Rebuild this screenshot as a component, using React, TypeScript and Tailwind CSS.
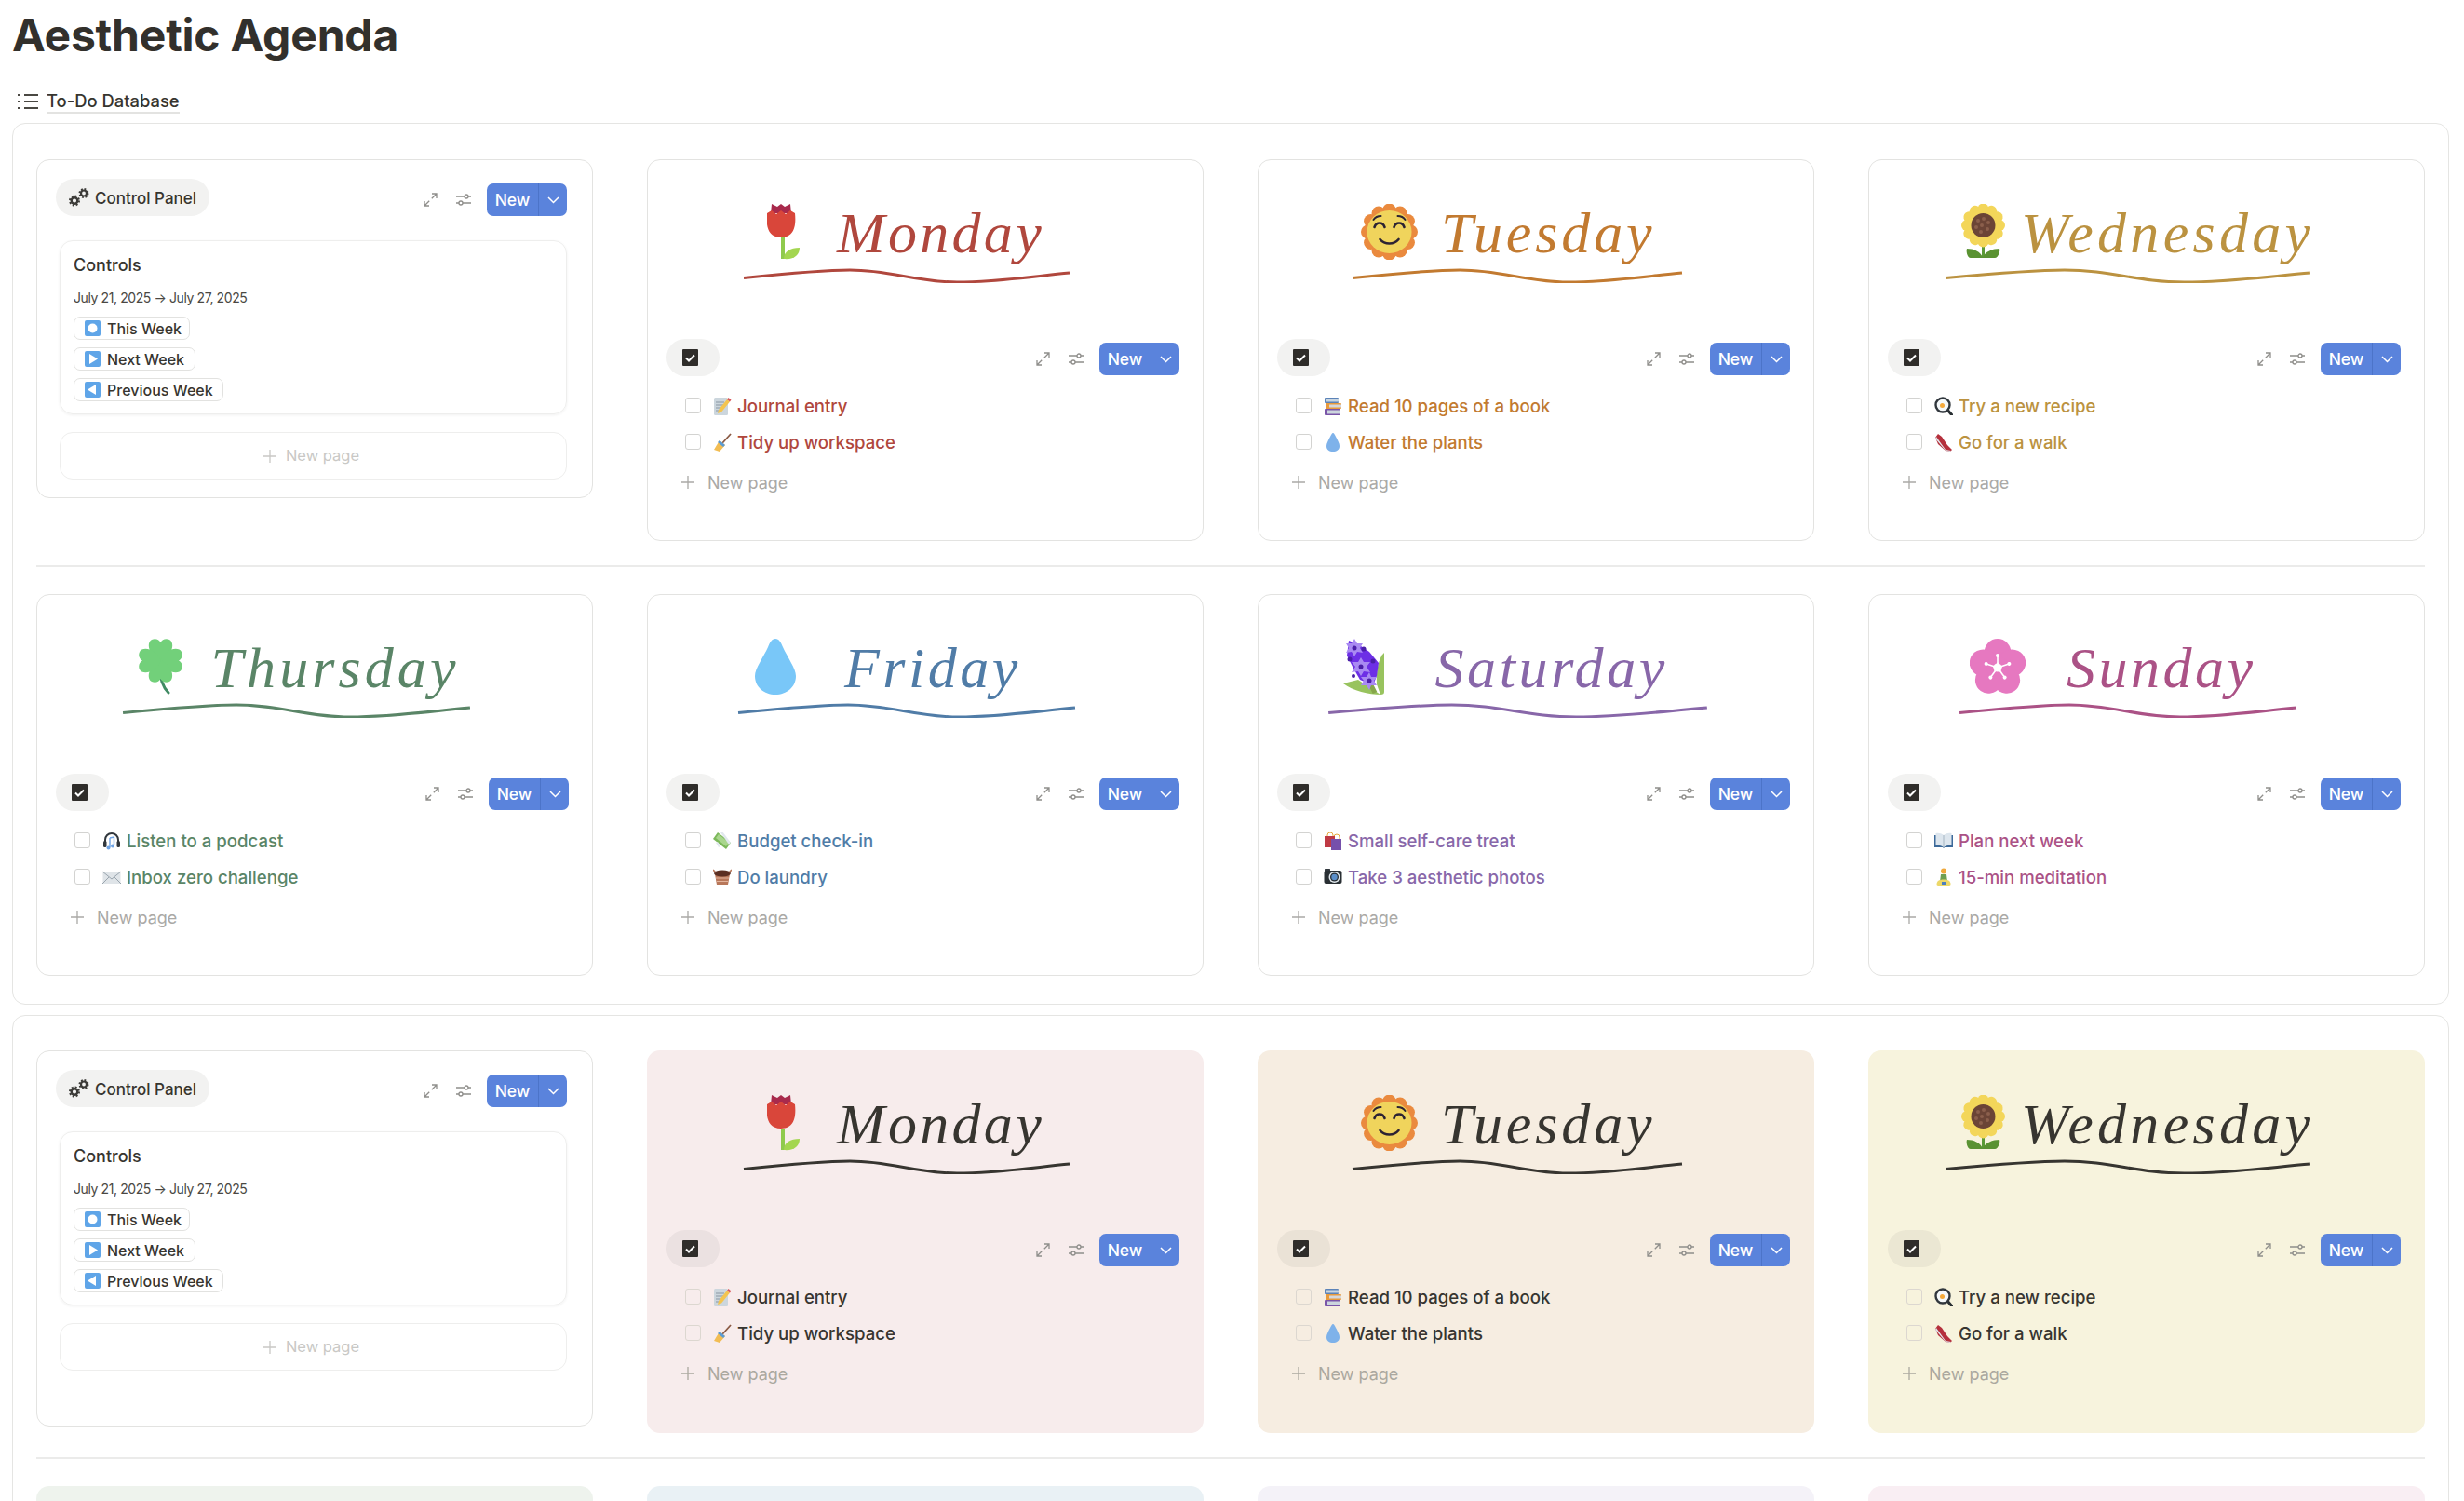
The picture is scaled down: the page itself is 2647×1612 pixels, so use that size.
import type { ReactNode } from 'react';

type Task = { icon: string; label: string };
type Day = {
  name: string;
  flower: string;
  color: string;
  underline: string;
  titleRow: string;
  tracking: string;
  tasks: Task[];
};

const days: Day[] = [
  { name: 'Monday', flower: 'tulip', color: 'text-[#b0473d]', underline: 'w-[352px]', titleRow: 'pl-[26px] gap-[40px]', tracking: 'tracking-[3.300px]', tasks: [{ icon: 'memo', label: 'Journal entry' }, { icon: 'broom', label: 'Tidy up workspace' }] },
  { name: 'Tuesday', flower: 'sun', color: 'text-[#c27a30]', underline: 'w-[356px]', titleRow: 'pl-[10px] gap-[25px]', tracking: 'tracking-[3.900px]', tasks: [{ icon: 'books', label: 'Read 10 pages of a book' }, { icon: 'drop', label: 'Water the plants' }] },
  { name: 'Wednesday', flower: 'sunflower', color: 'text-[#bb9240]', underline: 'w-[394px]', titleRow: 'pl-[18px] gap-[17px]', tracking: 'tracking-[4.300px]', tasks: [{ icon: 'pan', label: 'Try a new recipe' }, { icon: 'shoe', label: 'Go for a walk' }] },
  { name: 'Thursday', flower: 'clover', color: 'text-[#5a8567]', underline: 'w-[375px]', titleRow: 'pl-[18px] gap-[31px]', tracking: 'tracking-[4.100px]', tasks: [{ icon: 'headphones', label: 'Listen to a podcast' }, { icon: 'mail', label: 'Inbox zero challenge' }] },
  { name: 'Friday', flower: 'bigdrop', color: 'text-[#507ca7]', underline: 'w-[364px]', titleRow: 'pl-[19px] gap-[52px]', tracking: 'tracking-[3.500px]', tasks: [{ icon: 'money', label: 'Budget check-in' }, { icon: 'basket', label: 'Do laundry' }] },
  { name: 'Saturday', flower: 'hyacinth', color: 'text-[#8867a9]', underline: 'w-[409px]', titleRow: 'pl-[17px] gap-[55px]', tracking: 'tracking-[3.600px]', tasks: [{ icon: 'bags', label: 'Small self-care treat' }, { icon: 'camera', label: 'Take 3 aesthetic photos' }] },
  { name: 'Sunday', flower: 'blossom', color: 'text-[#ab5286]', underline: 'w-[364px]', titleRow: 'pl-[12px] gap-[44px]', tracking: 'tracking-[3.500px]', tasks: [{ icon: 'book', label: 'Plan next week' }, { icon: 'lotus', label: '15-min meditation' }] },
];

const flowers: Record<string, ReactNode> = {
  tulip: (
    <svg className="shrink-0" width="35" height="60" viewBox="0 0 35 60">
      <path d="M15 36h4v23h-4z" fill="#8fca4d" />
      <path d="M18 59c0-8 7-12 17-12 0 8-6 13-17 12z" fill="#a3d650" />
      <path d="M4 10 5 0l6 3 4-3 4 3 6-3 1 10z" fill="#a82a4c" />
      <path d="M0 10l5-3 5 4 5-4 5 4 5-4 5 3c1 10 1 26-15 26S-1 20 0 10z" fill="#d9463a" />
    </svg>
  ),
  sun: (
    <svg className="shrink-0" width="61" height="60" viewBox="0 0 60 60">
      {[0, 30, 60, 90, 120, 150, 180, 210, 240, 270, 300, 330].map((a) => (
        <circle key={a} cx={30 + 23 * Math.sin((a * Math.PI) / 180)} cy={30 - 23 * Math.cos((a * Math.PI) / 180)} r="7.5" fill="#ea8a3e" />
      ))}
      <circle cx="30" cy="30" r="23" fill="#ea8a3e" />
      <ellipse cx="30" cy="30" rx="24" ry="23" fill="#f0d45c" />
      <g fill="none" stroke="#2c2333" strokeWidth="2.6" strokeLinecap="round">
        <path d="M14 25c2-6 9-6 11 0" />
        <path d="M35 25c2-6 9-6 11 0" />
        <path d="M20 38c5 6 15 6 20 0" />
        <path d="M13 17c2-3 5-4 8-4M39 13c3 0 6 1 8 4" strokeWidth="2" />
      </g>
    </svg>
  ),
  sunflower: (
    <svg className="shrink-0" width="47" height="60" viewBox="0 0 47 60">
      <path d="M22 40h3v18h-3z" fill="#5a9a36" />
      <path d="M23 58H10C6 58 5 50 6 48c7 0 15 3 17 10zM23 58h13c4 0 6-8 5-10-7 0-16 3-18 10z" fill="#5a9232" />
      {[0, 30, 60, 90, 120, 150, 180, 210, 240, 270, 300, 330].map((a) => (
        <ellipse key={a} cx="23.5" cy="5.5" rx="6" ry="6" transform={`rotate(${a} 23.5 23)`} fill="#f3d65a" />
      ))}
      <circle cx="23.5" cy="23" r="17" fill="#f3d65a" />
      <circle cx="23.5" cy="23" r="13" fill="#6b4436" />
      <g fill="#8b5f4c">
        <circle cx="18" cy="18" r="2" /><circle cx="24" cy="16" r="2" /><circle cx="29" cy="20" r="2" />
        <circle cx="16" cy="25" r="2" /><circle cx="22" cy="23" r="2" /><circle cx="28" cy="27" r="2" />
        <circle cx="21" cy="30" r="2" />
      </g>
    </svg>
  ),
  clover: (
    <svg className="shrink-0" width="47" height="60" viewBox="0 0 47 60">
      <path d="M23 26c-1 14 1 24 9 32" fill="none" stroke="#3f8a63" strokeWidth="3" strokeLinecap="round" />
      {[0, 90, 180, 270].map((a) => (
        <path key={a} d="M23.5 24C10 18 8 4 14 1c4-2 8 0 9.500 3C25 1 29-1 33 1c6 3 4 17-9.500 23z" transform={`rotate(${a} 23.500 23.500)`} fill="#72d07a" />
      ))}
    </svg>
  ),
  bigdrop: (
    <svg className="shrink-0" width="44" height="60" viewBox="0 0 44 60">
      <path d="M22 0c4 0 6 4 8 9 5 11 14 23 14 31 0 12-10 20-22 20S0 52 0 40c0-8 9-20 14-31 2-5 4-9 8-9z" fill="#79c7f8" />
    </svg>
  ),
  hyacinth: (
    <svg className="shrink-0" width="44" height="60" viewBox="0 0 44 60">
      <path d="M0 48l16-4 24 16c-12 0-30-4-40-12z" fill="#98c35e" />
      <path d="M44 15c-6 5-9 20-8 34l4 11c3 0 4-1 4-3z" fill="#98c35e" />
      <path d="M26 42l8 16" stroke="#86a64a" strokeWidth="5" />
      <path d="M6 2l10 4 12 8 10 12-2 14-4 10-14-6-8-14-6-12z" fill="#6d2fe6" />
      <g fill="#a98af2">
        <path d="M12 0l3 5 6 0-3 5 3 5-6-1-3 5-3-5-6 1 3-5-3-5 6 0z" />
        <path d="M19 20l3 5 7 0-4 5 4 6-7-1-3 5-3-5-7 1 4-6-4-5 7 0z" />
        <path d="M28 36l2 5 6 0-3 4 3 5-6 0-2 5-3-5-6 0 3-5-3-4 6 0z" />
      </g>
      <g fill="#4b1fa8">
        <circle cx="12" cy="10" r="2.500" /><circle cx="19" cy="30" r="2.500" /><circle cx="28" cy="45" r="2.500" />
        <circle cx="22" cy="11" r="2.500" /><circle cx="32" cy="24" r="2.500" /><circle cx="7" cy="22" r="2.500" /><circle cx="11" cy="40" r="2" />
      </g>
    </svg>
  ),
  blossom: (
    <svg className="shrink-0" width="60" height="60" viewBox="0 0 60 60">
      {[0, 72, 144, 216, 288].map((a) => (
        <ellipse key={a} cx="30" cy="15" rx="14.500" ry="15" transform={`rotate(${a} 30 31)`} fill="#e678c0" />
      ))}
      <circle cx="30" cy="31" r="12" fill="#e678c0" />
      {[0, 72, 144, 216, 288].map((a) => (
        <g key={a} transform={`rotate(${a} 30 31)`}>
          <path d="M30 31V19" stroke="#fff" strokeWidth="1.600" />
          <circle cx="30" cy="18" r="2" fill="#fff" />
          <path d="M26 31l4-6 4 6z" fill="#fff" />
        </g>
      ))}
      <circle cx="30" cy="31" r="4.500" fill="#fff" />
    </svg>
  ),
};

const emojis: Record<string, ReactNode> = {
  memo: (
    <>
      <rect x="1" y="1" width="15" height="19" rx="1.500" fill="#ccd6dd" />
      <path d="M3 6h9M3 9h8M3 12h6M3 15h6" stroke="#8a97a3" strokeWidth="1" />
      <path d="M6 14 15 3l3 2.500L9 16.500 5 18z" fill="#f4c44e" />
      <path d="M15 3l1.500-2 3 2.500-1.500 2z" fill="#d9585c" />
    </>
  ),
  broom: (
    <>
      <path d="M10 11 19 1" stroke="#8a5a44" strokeWidth="1.800" />
      <path d="M7 8l6 5-6 7-6-2z" fill="#f2bd53" />
      <path d="M7 8l6 5-2 2-6-5z" fill="#5b9bd5" />
    </>
  ),
  books: (
    <>
      <rect x="1" y="1" width="15" height="6" rx="1" fill="#5b83b8" />
      <rect x="3" y="2.500" width="13" height="3" fill="#c9d6e2" />
      <rect x="2" y="7" width="17" height="6" rx="1" fill="#e89a3c" />
      <rect x="6" y="8.500" width="13" height="3" fill="#d6d8dc" />
      <rect x="1" y="13" width="17" height="7" rx="1" fill="#7a55a8" />
      <rect x="4" y="14.500" width="14" height="4" fill="#ccd6dd" />
    </>
  ),
  drop: <path d="M10 0c1 0 2 2 3 4 2 4 4 7 4 10 0 4-3 6-7 6s-7-2-7-6c0-3 2-6 4-10 1-2 2-4 3-4z" fill="#7eb2ea" />,
  pan: (
    <>
      <path d="M14 14l5 6" stroke="#292f33" strokeWidth="3" strokeLinecap="round" />
      <circle cx="9" cy="9" r="7.500" fill="#f5f8fa" stroke="#31373d" strokeWidth="2.400" />
      <circle cx="8.500" cy="9.500" r="2.500" fill="#f4a93c" />
    </>
  ),
  shoe: (
    <>
      <path d="M1 5l3-4 4 3 6 9 5 5-2 2-5-1-8-7z" fill="#b5303c" />
      <path d="M1 6l11 13 5 1 1-1-6-1L2 4z" fill="#e1e8ed" />
    </>
  ),
  headphones: (
    <>
      <path d="M3 11V9a7 7 0 0 1 14 0v2" fill="none" stroke="#31373d" strokeWidth="2" />
      <rect x="1" y="10" width="3.500" height="7" rx="1.500" fill="#31373d" />
      <rect x="15.500" y="10" width="3.500" height="7" rx="1.500" fill="#31373d" />
      <path d="M8 7v10M12.500 6v9M8 7l4.500-1" stroke="#6fa4e6" strokeWidth="1.400" fill="none" />
      <circle cx="6.500" cy="17.500" r="2" fill="#6fa4e6" />
      <circle cx="11" cy="15.500" r="2" fill="#6fa4e6" />
    </>
  ),
  mail: (
    <>
      <rect x="0.500" y="4" width="19" height="13" fill="#dfe4e8" />
      <path d="M0 4l10 8 10-8M0 17l7-7M20 17l-7-7" fill="none" stroke="#9aa5ae" strokeWidth="1" />
    </>
  ),
  money: (
    <>
      <path d="M5 1l14 11-5 7L0 8z" fill="#7cb85a" />
      <path d="M6 3l11 9-3 4L3 7z" fill="#a9d68d" />
      <path d="M8 1l2-1 9 12-2 2z" fill="#e1e8ed" />
      <path d="M3 12l2-1 3 5-2 1z" fill="#e1e8ed" />
    </>
  ),
  basket: (
    <>
      <path d="M2 7h16l-2 11H4z" fill="#b8775a" />
      <path d="M3 11h14M4 14.500h12" stroke="#e3b49c" strokeWidth="1" />
      <ellipse cx="10" cy="6" rx="9" ry="3.500" fill="#5c2f22" />
      <path d="M0 2l3 3M20 2l-3 3" stroke="#b8775a" strokeWidth="1.600" />
    </>
  ),
  bags: (
    <>
      <path d="M4 6V4a3 3 0 0 1 6 0v2M11 8V6a3 3 0 0 1 6 0v2" fill="none" stroke="#e8a83c" strokeWidth="1" />
      <rect x="1" y="5" width="11" height="12" fill="#bf3a44" />
      <rect x="8" y="8" width="11" height="12" fill="#7650ab" />
    </>
  ),
  camera: (
    <>
      <rect x="1" y="1" width="6" height="3" rx="0.500" fill="#31373d" />
      <rect x="0.500" y="3" width="19" height="14" rx="2" fill="#292f33" />
      <circle cx="11.500" cy="10" r="6" fill="#e1e8ed" />
      <circle cx="11.500" cy="10" r="4.500" fill="#292f33" />
      <circle cx="11.500" cy="10" r="3.200" fill="#5b8fc9" />
    </>
  ),
  book: (
    <>
      <path d="M0 4h20v13H11l-1 1-1-1H0z" fill="#3d6a9a" />
      <path d="M1.500 2c3-.500 6 0 8.500 2 2.500-2 5.500-2.500 8.500-2v13c-3-.500-6 0-8.500 2-2.500-2-5.500-2.500-8.500-2z" fill="#dde6ee" />
      <path d="M10 4v13" stroke="#9aa9b8" strokeWidth="0.800" />
    </>
  ),
  lotus: (
    <>
      <circle cx="10" cy="3.500" r="3" fill="#f0a93c" />
      <path d="M7 7h6l1 8H6z" fill="#6f9f52" />
      <path d="M4 14c3-2 9-2 12 0 2 2 2 5 0 5H4c-2 0-2-3 0-5z" fill="#ecd869" />
      <path d="M8 15h4v3H8z" fill="#4d7fbf" />
    </>
  ),
};

function Expand() {
  return (
    <svg width="15" height="15" viewBox="0 0 15 15" fill="none" stroke="#8f8e8b" strokeWidth="1.300">
      <path d="M9 1h5v5M14 1 8.800 6.200M6 14H1V9M1 14l5.200-5.200" />
    </svg>
  );
}

function Sliders() {
  return (
    <svg width="16" height="15" viewBox="0 0 16 15" fill="none" stroke="#8f8e8b" strokeWidth="1.300">
      <path d="M0 4h9M13 4h3M0 11h3M7 11h9" />
      <circle cx="11" cy="4" r="2" />
      <circle cx="5" cy="11" r="2" />
    </svg>
  );
}

function Gears() {
  return (
    <svg width="22" height="20" viewBox="0 0 22 20" fill="none" stroke="#3c3b38">
      <circle cx="6" cy="13.500" r="3.300" strokeWidth="2.400" />
      <circle cx="6" cy="13.500" r="5" strokeWidth="2" strokeDasharray="2 1.930" />
      <circle cx="16" cy="5.500" r="3" strokeWidth="2.200" />
      <circle cx="16" cy="5.500" r="4.500" strokeWidth="2" strokeDasharray="1.800 1.730" />
    </svg>
  );
}

function Toolbar({ pill }: { pill: ReactNode }) {
  return (
    <div className="flex items-start justify-between">
      {pill}
      <div className="mt-[4px] flex h-[35px] items-center">
        <Expand />
        <div className="ml-[20px] mr-[17px]">
          <Sliders />
        </div>
        <div className="flex h-[35px] w-[86px] overflow-hidden rounded-[7px] bg-[#5a83dc] text-white">
          <div className="flex w-[56px] items-center justify-center border-r border-[#4c74c9] pt-[1px] text-[17.500px] font-medium">New</div>
          <div className="flex flex-1 items-center justify-center">
            <svg width="13" height="8" viewBox="0 0 13 8" fill="none" stroke="#fff" strokeWidth="1.500">
              <path d="M1 1l5.500 5.500L12 1" />
            </svg>
          </div>
        </div>
      </div>
    </div>
  );
}

function DayCard({ day, bg, color, pillBg, muted, box }: { day: Day; bg: string; color: string; pillBg: string; muted: string; box: string }) {
  return (
    <div className={`h-full overflow-hidden rounded-[14px] ${bg}`}>
      <div className={`flex h-[192px] flex-col items-center pr-[40px] pt-[47px] ${color}`}>
        <div className={day.underline}>
          <div className={`flex h-[60px] items-start ${day.titleRow}`}>
            {flowers[day.flower]}
            <span className={`font-['Liberation_Serif',serif] text-[62px] italic leading-[62px] ${day.tracking}`}>{day.name}</span>
          </div>
          <svg className="mt-[9px] h-[16px] w-full" viewBox="0 0 352 16" preserveAspectRatio="none" fill="none" stroke="currentColor" strokeWidth="3">
            <path d="M1 10.500C40 6.500 85 2 115 2c45 0 70 13 115 13 40 0 80-6 121-10" />
          </svg>
        </div>
      </div>
      <div className="pl-[20px] pr-[25px]">
        <Toolbar
          pill={
            <div className={`flex h-[40px] w-[57px] items-center rounded-[20px] pl-[17px] ${pillBg}`}>
              <svg width="17" height="18" viewBox="0 0 17 18">
                <rect width="17" height="18" rx="1" fill="#2f2d2a" />
                <path d="M4 9.500l3 3 6-6" fill="none" stroke="#fff" strokeWidth="2" />
              </svg>
            </div>
          }
        />
      </div>
      <div className="mt-[23px] pl-[40px]">
        {day.tasks.map((t) => (
          <div key={t.label} className="flex h-[39px] items-start">
            <div className="flex h-[17px] items-center">
              <div className={`h-[17px] w-[17px] rounded-[3px] border ${box}`} />
              <svg className="ml-[13px] mr-[6px]" width="20" height="20" viewBox="0 0 20 20">
                {emojis[t.icon]}
              </svg>
              <span className={`pt-[2px] text-[18.600px] font-medium whitespace-nowrap ${color}`}>{t.label}</span>
            </div>
          </div>
        ))}
        <NewPageRow muted={muted} />
      </div>
    </div>
  );
}

function NewPageRow({ muted }: { muted: string }) {
  return (
    <div className={`-ml-[4px] flex h-[26px] items-center text-[18px] ${muted}`}>
      <Plus />
      <span className="ml-[14px]">New page</span>
    </div>
  );
}

function Plus() {
  return (
    <svg width="14" height="14" viewBox="0 0 14 14" stroke="currentColor" strokeWidth="1.300">
      <path d="M7 0v14M0 7h14" />
    </svg>
  );
}

function WeekButton({ width, shape, label }: { width: string; shape: ReactNode; label: string }) {
  return (
    <div className={`flex h-[25px] items-center rounded-[7px] border border-[#e2e2e0] pl-[11px] text-[16px] font-medium text-[#37352f] ${width}`}>
      <svg className="mr-[7px]" width="17" height="17" viewBox="0 0 17 17">
        <rect width="17" height="17" rx="2" fill="#5fa5e8" />
        {shape}
      </svg>
      {label}
    </div>
  );
}

function ControlCard({ height }: { height: string }) {
  return (
    <div className={`rounded-[14px] border border-[#e3e3e1] pl-[20px] pr-[27px] pt-[21px] ${height}`}>
      <Toolbar
        pill={
          <div className="-mt-[1px] flex h-[40px] items-center rounded-[20px] bg-[#f2f2f1] pl-[14px] pr-[14px] text-[17px] font-medium text-[#37352f]">
            <Gears />
            <span className="ml-[6px] pt-[3px]">Control Panel</span>
          </div>
        }
      />
      <div className="ml-[4px] mt-[26px] h-[187px] rounded-[14px] border border-[#eeeeed] pl-[14px] pt-[14px] shadow-[0_1px_3px_rgba(0,0,0,0.06)]">
        <div className="text-[18px] font-medium leading-[24px] text-[#37352f]">Controls</div>
        <div className="mt-[13px] text-[14px] leading-[20px] tracking-[-0.400px] text-[#4a4843]">July 21, 2025 → July 27, 2025</div>
        <div className="mt-[10px] flex flex-col items-start gap-[8px]">
          <WeekButton width="w-[125px]" shape={<circle cx="8.500" cy="8.500" r="5" fill="#fff" />} label="This Week" />
          <WeekButton width="w-[131px]" shape={<path d="M5 3l9 5.500L5 14z" fill="#fff" />} label="Next Week" />
          <WeekButton width="w-[161px]" shape={<path d="M12 3 3 8.500 12 14z" fill="#fff" />} label="Previous Week" />
        </div>
      </div>
      <div className="ml-[4px] mt-[19px] flex h-[51px] items-center justify-center rounded-[14px] border border-[#eeeeed] pr-[4px] text-[16.500px] text-[#c9c8c5]">
        <Plus />
        <span className="ml-[10px]">New page</span>
      </div>
    </div>
  );
}

function Divider() {
  return <div className="mt-[26px] h-[2px] bg-[#ebebea]" />;
}

const whiteCard = {
  bg: 'border border-[#e3e3e1] bg-white',
  pillBg: 'bg-[#f2f2f1]',
  muted: 'text-[#aaa9a6]',
  box: 'border-[#d3d3d1]',
};

function tinted(bg: string) {
  return { bg: `border border-transparent ${bg}`, pillBg: 'bg-[#37352f]/[0.06]', muted: 'text-[#aba89f]', box: 'border-[#dcd7d0]', color: 'text-[#373530]' };
}

export default function App() {
  return (
    <div className="h-[1612px] overflow-hidden bg-white pt-[8px] font-['Inter','Noto_Sans',sans-serif]">
      <h1 className="pl-[13px] text-[48px] font-bold leading-[60px] tracking-[-0.200px] text-[#32302c]">Aesthetic Agenda</h1>

      <div className="mt-[28px] flex h-[25px] items-center pl-[19px]">
        <svg width="22" height="18" viewBox="0 0 22 18" stroke="#4a4843" strokeWidth="2" fill="none">
          <path d="M0 2h3M7 2h15M0 9h3M7 9h15M0 16h3M7 16h15" />
        </svg>
        <span className="ml-[9px] border-b-2 border-[#e3e3e1] text-[18.400px] font-medium leading-[24px] text-[#37352f]">To-Do Database</span>
      </div>

      <div className="ml-[13px] mt-[11px] h-[947px] w-[2618px] rounded-[14px] border border-[#e5e5e3] pl-[25px] pt-[38px]">
        <div className="grid h-[410px] w-[2566px] grid-cols-4 items-start gap-x-[58px]">
          <ControlCard height="h-[364px]" />
          {days.slice(0, 3).map((d) => (
            <DayCard key={d.name} day={d} color={d.color} {...whiteCard} />
          ))}
        </div>
        <div className="w-[2566px]">
          <Divider />
        </div>
        <div className="mt-[29px] grid h-[410px] w-[2566px] grid-cols-4 gap-x-[58px]">
          {days.slice(3).map((d) => (
            <DayCard key={d.name} day={d} color={d.color} {...whiteCard} />
          ))}
        </div>
      </div>

      <div className="ml-[13px] mt-[11px] w-[2618px] rounded-[14px] border border-[#e5e5e3] pl-[25px] pt-[37px]">
        <div className="grid h-[411px] w-[2566px] grid-cols-4 items-start gap-x-[58px]">
          <ControlCard height="h-[404px]" />
          <DayCard day={days[0]} {...tinted('bg-[#f7ecec]')} />
          <DayCard day={days[1]} {...tinted('bg-[#f6ede1]')} />
          <DayCard day={days[2]} {...tinted('bg-[#f7f3dd]')} />
        </div>
        <div className="w-[2566px]">
          <Divider />
        </div>
        <div className="mt-[29px] grid h-[100px] w-[2566px] grid-cols-4 gap-x-[58px]">
          <div className="rounded-[14px] bg-[#eef3ed]" />
          <div className="rounded-[14px] bg-[#e9f1f5]" />
          <div className="rounded-[14px] bg-[#f4f2f8]" />
          <div className="rounded-[14px] bg-[#f9eef3]" />
        </div>
      </div>
    </div>
  );
}
